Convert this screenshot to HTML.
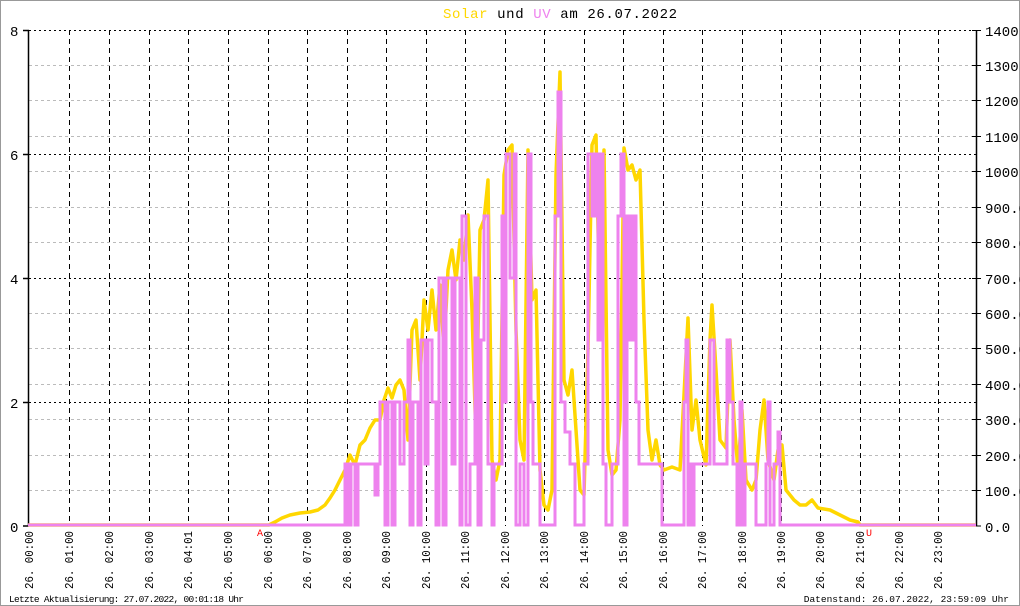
<!DOCTYPE html>
<html><head><meta charset="utf-8"><style>
html,body{margin:0;padding:0;background:#fff}
svg{display:block}
text{font-family:"Liberation Mono","DejaVu Sans Mono",monospace}
</style></head><body>
<svg width="1020" height="606" viewBox="0 0 1020 606" xmlns="http://www.w3.org/2000/svg">
<rect x="0.5" y="0.5" width="1019" height="605" fill="#fff" stroke="#999"/>
<text x="560" y="18" font-size="14" text-anchor="middle" textLength="234"><tspan fill="#ffd700">Solar</tspan> und <tspan fill="#ee82ee">UV</tspan> am 26.07.2022</text>
<g stroke="#bbb" stroke-dasharray="3,3" stroke-width="1">
<line x1="29" x2="976" y1="65.5" y2="65.5"/><line x1="29" x2="976" y1="100.5" y2="100.5"/><line x1="29" x2="976" y1="136.5" y2="136.5"/><line x1="29" x2="976" y1="171.5" y2="171.5"/><line x1="29" x2="976" y1="207.5" y2="207.5"/><line x1="29" x2="976" y1="242.5" y2="242.5"/><line x1="29" x2="976" y1="313.5" y2="313.5"/><line x1="29" x2="976" y1="348.5" y2="348.5"/><line x1="29" x2="976" y1="384.5" y2="384.5"/><line x1="29" x2="976" y1="419.5" y2="419.5"/><line x1="29" x2="976" y1="455.5" y2="455.5"/><line x1="29" x2="976" y1="490.5" y2="490.5"/>
</g>
<g stroke="#000" stroke-dasharray="2,3" stroke-width="1">
<line x1="29" x2="976" y1="30.5" y2="30.5"/><line x1="29" x2="976" y1="154.5" y2="154.5"/><line x1="29" x2="976" y1="278.5" y2="278.5"/><line x1="29" x2="976" y1="402.5" y2="402.5"/>
</g>
<g stroke="#000" stroke-dasharray="5,4" stroke-width="1">
<line x1="69.5" x2="69.5" y1="30" y2="526"/><line x1="109.5" x2="109.5" y1="30" y2="526"/><line x1="149.5" x2="149.5" y1="30" y2="526"/><line x1="188.5" x2="188.5" y1="30" y2="526"/><line x1="228.5" x2="228.5" y1="30" y2="526"/><line x1="268.5" x2="268.5" y1="30" y2="526"/><line x1="307.5" x2="307.5" y1="30" y2="526"/><line x1="347.5" x2="347.5" y1="30" y2="526"/><line x1="386.5" x2="386.5" y1="30" y2="526"/><line x1="426.5" x2="426.5" y1="30" y2="526"/><line x1="465.5" x2="465.5" y1="30" y2="526"/><line x1="505.5" x2="505.5" y1="30" y2="526"/><line x1="544.5" x2="544.5" y1="30" y2="526"/><line x1="584.5" x2="584.5" y1="30" y2="526"/><line x1="623.5" x2="623.5" y1="30" y2="526"/><line x1="663.5" x2="663.5" y1="30" y2="526"/><line x1="702.5" x2="702.5" y1="30" y2="526"/><line x1="742.5" x2="742.5" y1="30" y2="526"/><line x1="781.5" x2="781.5" y1="30" y2="526"/><line x1="820.5" x2="820.5" y1="30" y2="526"/><line x1="860.5" x2="860.5" y1="30" y2="526"/><line x1="899.5" x2="899.5" y1="30" y2="526"/><line x1="938.5" x2="938.5" y1="30" y2="526"/>
</g>
<g stroke="#000" stroke-width="1.5">
<line x1="28.5" x2="28.5" y1="30" y2="526"/><line x1="976.5" x2="976.5" y1="30" y2="526"/>
<line x1="23" x2="29" y1="30.5" y2="30.5"/><line x1="23" x2="29" y1="154.5" y2="154.5"/><line x1="23" x2="29" y1="278.5" y2="278.5"/><line x1="23" x2="29" y1="402.5" y2="402.5"/><line x1="23" x2="29" y1="526" y2="526"/>
</g>
<g stroke="#000" stroke-width="1">
<line x1="972" x2="981" y1="30.5" y2="30.5"/><line x1="972" x2="981" y1="65.5" y2="65.5"/><line x1="972" x2="981" y1="100.5" y2="100.5"/><line x1="972" x2="981" y1="136.5" y2="136.5"/><line x1="972" x2="981" y1="171.5" y2="171.5"/><line x1="972" x2="981" y1="207.5" y2="207.5"/><line x1="972" x2="981" y1="242.5" y2="242.5"/><line x1="972" x2="981" y1="278.5" y2="278.5"/><line x1="972" x2="981" y1="313.5" y2="313.5"/><line x1="972" x2="981" y1="348.5" y2="348.5"/><line x1="972" x2="981" y1="384.5" y2="384.5"/><line x1="972" x2="981" y1="419.5" y2="419.5"/><line x1="972" x2="981" y1="455.5" y2="455.5"/><line x1="972" x2="981" y1="490.5" y2="490.5"/><line x1="972" x2="981" y1="526" y2="526"/>
</g>
<g font-size="14" fill="#000">
<text x="10" y="36">8</text><text x="10" y="160">6</text><text x="10" y="284">4</text><text x="10" y="408">2</text><text x="10" y="532">0</text>
<text x="985" y="36">1400</text><text x="985" y="71">1300</text><text x="985" y="106">1200</text><text x="985" y="142">1100</text><text x="985" y="177">1000</text><text x="985" y="213">900.0</text><text x="985" y="248">800.0</text><text x="985" y="284">700.0</text><text x="985" y="319">600.0</text><text x="985" y="354">500.0</text><text x="985" y="390">400.0</text><text x="985" y="425">300.0</text><text x="985" y="461">200.0</text><text x="985" y="496">100.0</text><text x="985" y="532">0.0</text>
</g>
<polyline fill="none" stroke="#ffd700" stroke-width="3.5" stroke-linejoin="round" points="28,525 269,525 275,522 282,518 290,515 300,513 310,512 318,510 325,505 330,498 335,490 340,480 345,470 350,455 355,465 360,445 365,440 370,428 375,420 380,420 384,400 388,388 392,398 396,385 400,380 404,390 408,440 412,330 416,320 420,380 424,300 428,330 432,290 436,330 440,285 444,350 448,270 452,250 456,280 460,240 464,260 468,215 472,310 476,440 480,230 484,220 488,180 492,460 496,480 500,460 504,175 508,150 512,145 516,330 520,440 524,460 528,150 532,300 536,290 540,470 544,505 548,510 552,490 556,175 560,72 564,380 568,395 572,370 576,430 580,490 584,495 588,350 592,145 596,135 600,320 604,150 608,450 612,475 616,470 620,420 624,148 628,170 632,165 636,180 640,170 644,320 648,430 652,460 656,440 660,465 664,470 672,467 680,470 684,395 688,318 692,430 696,400 700,440 706,465 710,340 712,305 716,370 720,440 726,448 730,340 734,420 738,470 742,410 746,480 752,490 756,480 760,430 764,400 768,460 774,480 778,450 782,445 786,490 794,500 800,505 806,505 812,500 818,508 830,510 840,515 850,520 858,522 860,525 976,525"/>
<polyline fill="none" stroke="#ee82ee" stroke-width="3" points="28,525 345,525 345,464 348,464 348,525 351,525 351,464 355,464 355,525 358,525 358,464 375,464 375,495 378,495 378,464 380,464 380,402 385,402 385,525 388,525 388,402 392,402 392,525 395,525 395,402 400,402 400,464 404,464 404,402 408,402 408,340 410,340 410,525 413,525 413,402 418,402 418,525 421,525 421,340 425,340 425,464 428,464 428,340 432,340 432,402 436,402 436,525 439,525 439,278 443,278 443,525 446,525 446,278 452,278 452,464 455,464 455,278 460,278 460,525 462,525 462,216 466,216 466,525 470,525 470,464 475,464 475,278 478,278 478,525 481,525 481,340 484,340 484,216 488,216 488,464 492,464 492,525 494,525 494,464 502,464 502,216 504,216 504,402 506,402 506,154 510,154 510,278 514,278 514,154 516,154 516,525 520,525 520,464 524,464 524,525 528,525 528,154 531,154 531,402 533,402 533,464 540,464 540,525 555,525 555,216 558,216 558,92 561,92 561,402 565,402 565,432 570,432 570,464 575,464 575,525 584,525 584,464 588,464 588,154 592,154 592,216 595,216 595,154 598,154 598,340 600,340 600,154 603,154 603,464 606,464 606,525 612,525 612,464 618,464 618,216 621,216 621,154 624,154 624,525 627,525 627,216 630,216 630,340 633,340 633,216 636,216 636,402 639,402 639,464 662,464 662,525 684,525 684,402 686,402 686,340 688,340 688,525 690,525 690,464 692,464 692,525 694,525 694,464 710,464 710,340 714,340 714,464 727,464 727,340 730,340 730,402 733,402 733,464 737,464 737,525 740,525 740,402 742,402 742,525 745,525 745,464 756,464 756,525 766,525 766,464 768,464 768,402 770,402 770,525 774,525 774,464 778,464 778,432 780,432 780,525 976,525"/>
<text x="257" y="536" font-size="10" fill="#f00">A</text>
<text x="866" y="536" font-size="10" fill="#f00">U</text>
<g font-size="12" fill="#000">
<text transform="translate(33,589) rotate(-90)" textLength="58" lengthAdjust="spacingAndGlyphs">26. 00:00</text>
<text transform="translate(73,589) rotate(-90)" textLength="58" lengthAdjust="spacingAndGlyphs">26. 01:00</text>
<text transform="translate(113,589) rotate(-90)" textLength="58" lengthAdjust="spacingAndGlyphs">26. 02:00</text>
<text transform="translate(153,589) rotate(-90)" textLength="58" lengthAdjust="spacingAndGlyphs">26. 03:00</text>
<text transform="translate(192,589) rotate(-90)" textLength="58" lengthAdjust="spacingAndGlyphs">26. 04:01</text>
<text transform="translate(232,589) rotate(-90)" textLength="58" lengthAdjust="spacingAndGlyphs">26. 05:00</text>
<text transform="translate(272,589) rotate(-90)" textLength="58" lengthAdjust="spacingAndGlyphs">26. 06:00</text>
<text transform="translate(311,589) rotate(-90)" textLength="58" lengthAdjust="spacingAndGlyphs">26. 07:00</text>
<text transform="translate(351,589) rotate(-90)" textLength="58" lengthAdjust="spacingAndGlyphs">26. 08:00</text>
<text transform="translate(390,589) rotate(-90)" textLength="58" lengthAdjust="spacingAndGlyphs">26. 09:00</text>
<text transform="translate(430,589) rotate(-90)" textLength="58" lengthAdjust="spacingAndGlyphs">26. 10:00</text>
<text transform="translate(469,589) rotate(-90)" textLength="58" lengthAdjust="spacingAndGlyphs">26. 11:00</text>
<text transform="translate(509,589) rotate(-90)" textLength="58" lengthAdjust="spacingAndGlyphs">26. 12:00</text>
<text transform="translate(548,589) rotate(-90)" textLength="58" lengthAdjust="spacingAndGlyphs">26. 13:00</text>
<text transform="translate(588,589) rotate(-90)" textLength="58" lengthAdjust="spacingAndGlyphs">26. 14:00</text>
<text transform="translate(627,589) rotate(-90)" textLength="58" lengthAdjust="spacingAndGlyphs">26. 15:00</text>
<text transform="translate(667,589) rotate(-90)" textLength="58" lengthAdjust="spacingAndGlyphs">26. 16:00</text>
<text transform="translate(706,589) rotate(-90)" textLength="58" lengthAdjust="spacingAndGlyphs">26. 17:00</text>
<text transform="translate(746,589) rotate(-90)" textLength="58" lengthAdjust="spacingAndGlyphs">26. 18:00</text>
<text transform="translate(785,589) rotate(-90)" textLength="58" lengthAdjust="spacingAndGlyphs">26. 19:00</text>
<text transform="translate(824,589) rotate(-90)" textLength="58" lengthAdjust="spacingAndGlyphs">26. 20:00</text>
<text transform="translate(864,589) rotate(-90)" textLength="58" lengthAdjust="spacingAndGlyphs">26. 21:00</text>
<text transform="translate(903,589) rotate(-90)" textLength="58" lengthAdjust="spacingAndGlyphs">26. 22:00</text>
<text transform="translate(942,589) rotate(-90)" textLength="58" lengthAdjust="spacingAndGlyphs">26. 23:00</text>
</g>
<text x="9" y="602" font-size="9.5" fill="#000" textLength="235">Letzte Aktualisierung: 27.07.2022, 00:01:18 Uhr</text>
<text x="1009" y="602" font-size="9.5" fill="#000" text-anchor="end">Datenstand: 26.07.2022, 23:59:09 Uhr</text>
</svg>
</body></html>
